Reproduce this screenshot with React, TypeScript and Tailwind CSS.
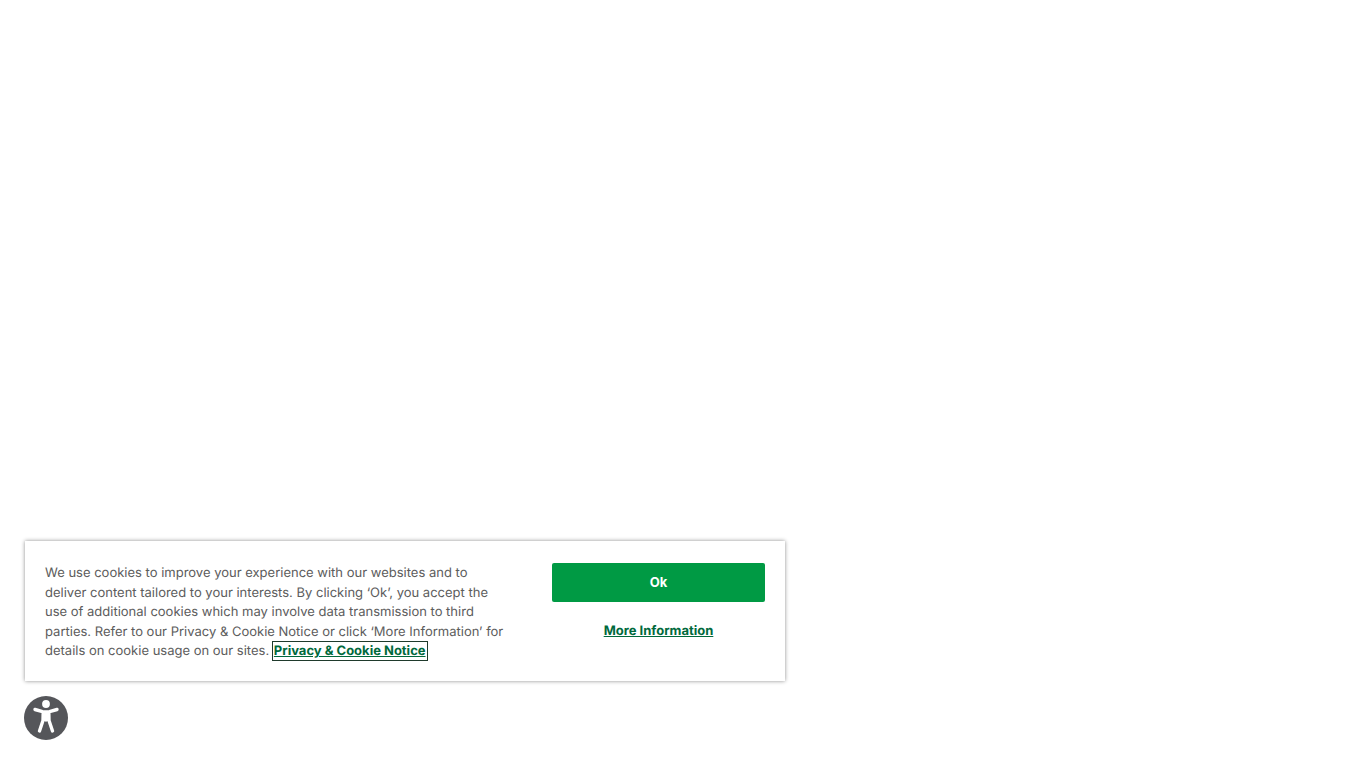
import React from 'react';

function AccessibilityIcon() {
  return (
    <svg viewBox="0 0 44 44" className="w-11 h-11 block">
      <circle cx="22" cy="22" r="22" fill="#55565a" />
      <circle cx="22" cy="8" r="3.9" fill="#fff" />
      <path
        d="M11 13.5 L18.5 15.6 Q22 16.4 25.5 15.6 L33 13.5 M22 16 L22 24 M19.2 16 L19 24.5 L15.5 35 M24.8 16 L25 24.5 L28.5 35"
        fill="none"
        stroke="#fff"
        strokeWidth="3.4"
        strokeLinecap="round"
        strokeLinejoin="round"
      />
    </svg>
  );
}

export default function App() {
  return (
    <div className="h-[768px] overflow-hidden bg-white flex flex-col justify-end pl-6 pb-7 font-['Inter',sans-serif] [text-rendering:geometricPrecision]">
      {/* Cookie banner */}
      <div className="w-[760px] h-[140px] ml-px bg-white flex justify-between pl-5 pr-5 pt-[22px] shadow-[0_0_4px_rgba(0,0,0,0.45)]">
        <p className="w-[465px] mt-px text-[13px] leading-[19.5px] text-[#5c5c5c]">
          We use cookies to improve your experience with our websites and to deliver content tailored to your interests. By clicking ‘Ok’, you accept the use of additional cookies which may involve data transmission to third parties. Refer to our Privacy &amp; Cookie Notice or click ‘More Information’ for details on cookie usage on our sites.{' '}
          <a href="#" className="ml-px font-bold underline text-[#00693c] outline outline-1 outline-[#1f3a2c] outline-offset-1">
            Privacy &amp; Cookie Notice
          </a>
        </p>
        <div className="w-[213px] flex flex-col items-center">
          <button className="w-full h-[39px] rounded-[2px] bg-[#009a44] text-white text-[13px] font-bold">
            Ok
          </button>
          <a href="#" className="mt-5 text-[13px] leading-[19px] font-bold underline text-[#00693c]">
            More Information
          </a>
        </div>
      </div>

      <div className="mt-[15px]">
        <AccessibilityIcon />
      </div>
    </div>
  );
}
